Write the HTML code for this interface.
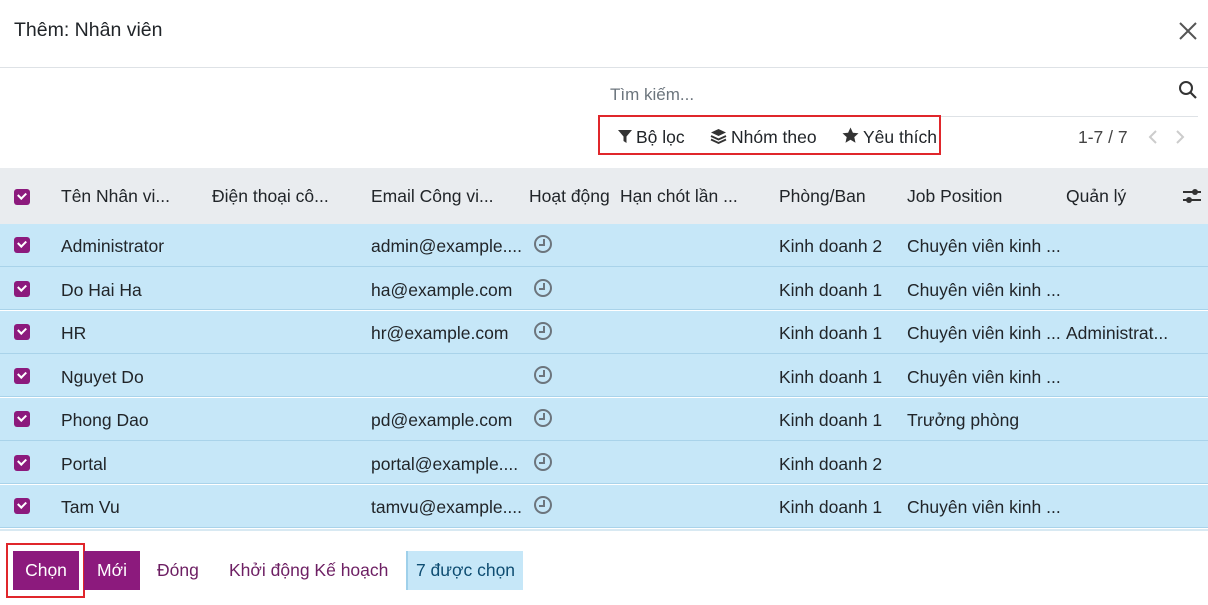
<!DOCTYPE html>
<html><head><meta charset="utf-8"><style>
*{margin:0;padding:0;box-sizing:border-box}
body{width:1208px;height:605px;background:#fff;font-family:"Liberation Sans","Noto Sans CJK SC",sans-serif;color:#212529;position:relative;overflow:hidden;font-size:17.5px}
.a{position:absolute;white-space:nowrap}
.cb{position:absolute;left:14px;width:16px;height:16px;background:#8c1a7d;border-radius:3px}
.cb:after{content:"";position:absolute;left:4px;top:3px;width:6px;height:4px;border-left:2px solid #fff;border-bottom:2px solid #fff;transform:rotate(-45deg)}
.row{position:absolute;left:0;width:1208px;height:43px;background:#c6e7f8;border-bottom:1px solid #a9d3ea}
.clk{position:absolute;width:18px;height:18px;border:2px solid #6c757d;border-radius:50%}
.clk:after{content:"";position:absolute;left:3px;top:2px;width:4px;height:5px;border-right:2px solid #6c757d;border-bottom:2px solid #6c757d}
.btn{position:absolute;top:551px;height:39px;line-height:39px;font-size:17.5px}
</style></head><body>
<div class="a" style="left:14px;top:19px;font-size:19.5px">Thêm: Nhân viên</div>
<svg class="a" style="left:1178px;top:21px" width="20" height="20"><path d="M2 2L18 18M18 2L2 18" stroke="#555" stroke-width="2"/></svg>
<div class="a" style="left:0;top:67px;width:1208px;height:1px;background:#dee2e6"></div>
<div class="a" style="left:610px;top:85px;color:#6c757d;font-size:17px">Tìm kiếm...</div>
<svg class="a" style="left:1178px;top:80px" width="20" height="20"><circle cx="8" cy="8" r="6" fill="none" stroke="#333" stroke-width="2"/><path d="M12.5 12.5L18 18" stroke="#333" stroke-width="2.2"/></svg>
<div class="a" style="left:600px;top:116px;width:598px;height:1px;background:#dee2e6"></div>
<div class="a" style="left:598px;top:115px;width:343px;height:40px;border:2px solid #e0262b"></div>
<svg class="a" style="left:618px;top:129px" width="14" height="14"><path d="M0 1H14L8.5 7.5V14L5.5 12V7.5Z" fill="#333"/></svg>
<div class="a" style="left:636px;top:127px">Bộ lọc</div>
<svg class="a" style="left:710px;top:128px" width="17" height="17"><path d="M8.5 1L16 4.5 8.5 8 1 4.5Z" fill="#333"/><path d="M1 8l7.5 3.5L16 8M1 11.5l7.5 3.5 7.5-3.5" fill="none" stroke="#333" stroke-width="1.8"/></svg>
<div class="a" style="left:731px;top:127px">Nhóm theo</div>
<svg class="a" style="left:842px;top:127px" width="17" height="17"><path d="M8.5 0.5l2.4 5.2 5.6.6-4.2 3.8 1.2 5.6-5-2.9-5 2.9 1.2-5.6L.5 6.3l5.6-.6z" fill="#333"/></svg>
<div class="a" style="left:863px;top:127px">Yêu thích</div>
<div class="a" style="left:1078px;top:127px;color:#444">1-7 / 7</div>
<svg class="a" style="left:1146px;top:129px" width="40" height="16"><path d="M10 2L4 8l6 6" fill="none" stroke="#ccc" stroke-width="2"/><path d="M31 2l6 6-6 6" fill="none" stroke="#ccc" stroke-width="2"/></svg>
<div class="a" style="left:0;top:168px;width:1208px;height:56px;background:#e9ecef"></div>
<div class="cb" style="top:189px"></div>
<div class="a" style="top:186px;left:61px">Tên Nhân vi...</div>
<div class="a" style="top:186px;left:212px">Điện thoại cô...</div>
<div class="a" style="top:186px;left:371px">Email Công vi...</div>
<div class="a" style="top:186px;left:529px">Hoạt động</div>
<div class="a" style="top:186px;left:620px">Hạn chót lần ...</div>
<div class="a" style="top:186px;left:779px">Phòng/Ban</div>
<div class="a" style="top:186px;left:907px">Job Position</div>
<div class="a" style="top:186px;left:1066px">Quản lý</div>
<svg class="a" style="left:1182px;top:187px" width="20" height="18"><path d="M1 5H19M1 13H19" stroke="#333" stroke-width="2"/><circle cx="13" cy="5" r="3" fill="#333"/><circle cx="7" cy="13" r="3" fill="#333"/></svg>

<div class="row" style="top:224px"></div><div class="cb" style="top:237px"></div>
<div class="a" style="top:236px;left:61px">Administrator</div><div class="a" style="top:236px;left:371px">admin@example....</div><div class="clk" style="top:235px;left:534px"></div><div class="a" style="top:236px;left:779px">Kinh doanh 2</div><div class="a" style="top:236px;left:907px">Chuyên viên kinh ...</div>

<div class="row" style="top:267px"></div><div class="cb" style="top:281px"></div>
<div class="a" style="top:280px;left:61px">Do Hai Ha</div><div class="a" style="top:280px;left:371px">ha@example.com</div><div class="clk" style="top:279px;left:534px"></div><div class="a" style="top:280px;left:779px">Kinh doanh 1</div><div class="a" style="top:280px;left:907px">Chuyên viên kinh ...</div>

<div class="row" style="top:311px"></div><div class="cb" style="top:324px"></div>
<div class="a" style="top:323px;left:61px">HR</div><div class="a" style="top:323px;left:371px">hr@example.com</div><div class="clk" style="top:322px;left:534px"></div><div class="a" style="top:323px;left:779px">Kinh doanh 1</div><div class="a" style="top:323px;left:907px">Chuyên viên kinh ...</div><div class="a" style="top:323px;left:1066px">Administrat...</div>

<div class="row" style="top:354px"></div><div class="cb" style="top:368px"></div>
<div class="a" style="top:367px;left:61px">Nguyet Do</div><div class="clk" style="top:366px;left:534px"></div><div class="a" style="top:367px;left:779px">Kinh doanh 1</div><div class="a" style="top:367px;left:907px">Chuyên viên kinh ...</div>

<div class="row" style="top:398px"></div><div class="cb" style="top:411px"></div>
<div class="a" style="top:410px;left:61px">Phong Dao</div><div class="a" style="top:410px;left:371px">pd@example.com</div><div class="clk" style="top:409px;left:534px"></div><div class="a" style="top:410px;left:779px">Kinh doanh 1</div><div class="a" style="top:410px;left:907px">Trưởng phòng</div>

<div class="row" style="top:441px"></div><div class="cb" style="top:455px"></div>
<div class="a" style="top:454px;left:61px">Portal</div><div class="a" style="top:454px;left:371px">portal@example....</div><div class="clk" style="top:453px;left:534px"></div><div class="a" style="top:454px;left:779px">Kinh doanh 2</div>

<div class="row" style="top:485px"></div><div class="cb" style="top:498px"></div>
<div class="a" style="top:497px;left:61px">Tam Vu</div><div class="a" style="top:497px;left:371px">tamvu@example....</div><div class="clk" style="top:496px;left:534px"></div><div class="a" style="top:497px;left:779px">Kinh doanh 1</div><div class="a" style="top:497px;left:907px">Chuyên viên kinh ...</div>

<div class="a" style="left:0;top:529px;width:1208px;height:2px;background:#d8e9f2"></div>
<div class="a" style="left:6px;top:543px;width:79px;height:55px;border:2px solid #e0262b"></div>
<div class="btn" style="left:13px;width:66px;background:#8c1a7d;color:#fff;text-align:center">Chọn</div>
<div class="btn" style="left:84px;width:56px;background:#8c1a7d;color:#fff;text-align:center">Mới</div>
<div class="btn" style="left:157px;color:#6d1f63">Đóng</div>
<div class="btn" style="left:229px;color:#6d1f63">Khởi động Kế hoạch</div>
<div class="btn" style="left:406px;width:117px;background:#c6e7f8;color:#0e4d72;text-align:center;border-left:2px solid #9fd0ea">7 được chọn</div>
</body></html>
